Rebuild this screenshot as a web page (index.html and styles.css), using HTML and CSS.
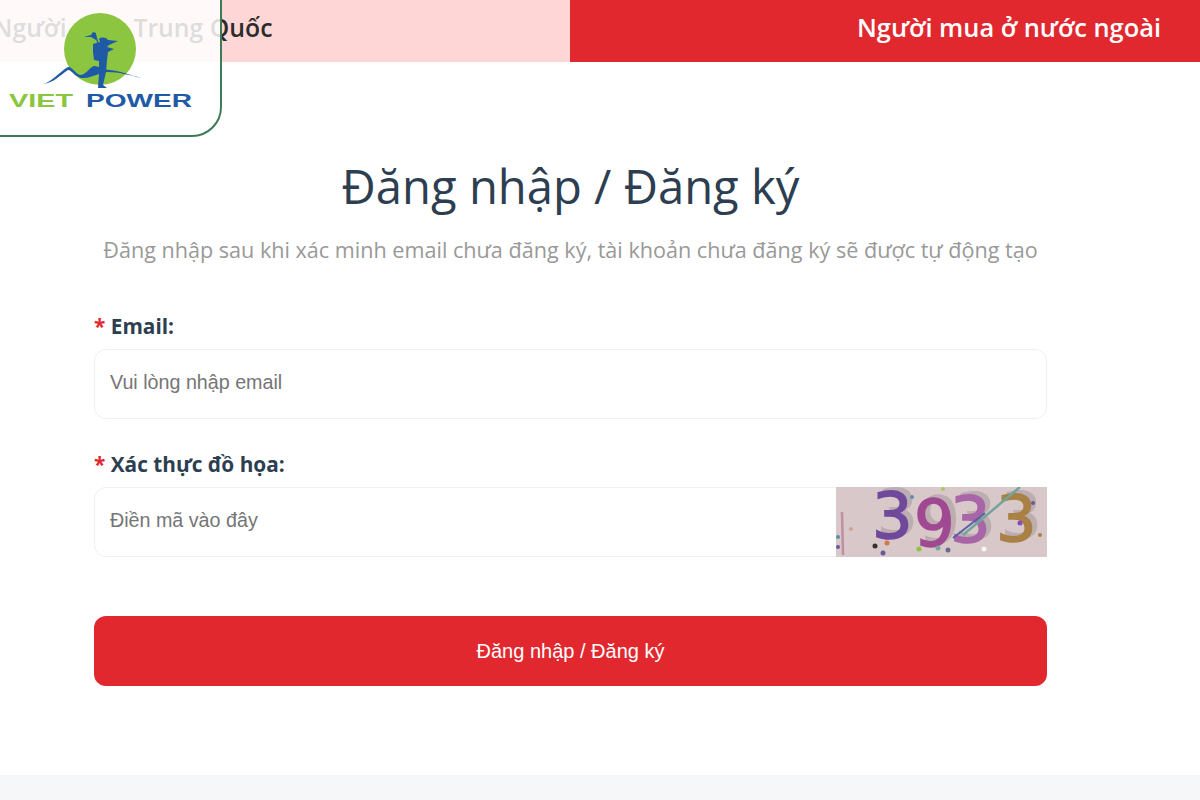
FILE: index.html
```html
<!DOCTYPE html>
<html lang="vi">
<head>
  <meta charset="UTF-8" />
  <meta name="viewport" content="width=device-width, initial-scale=1.0" />
  <title>Đăng nhập / Đăng ký</title>
  <link rel="stylesheet" href="styles.css">
</head>
<body>
<div class="tabs">
  <div class="tab tab-light">Người mua Trung Quốc</div>
  <div class="tab tab-active">Người mua ở nước ngoài</div>
</div>

<a class="logo" href="#">
  <svg width="222" height="137" viewBox="0 0 222 137">
    <circle cx="100" cy="49" r="36" fill="#8cc540"/>
    <path d="M43 84 C52 82 58 73 68 67 C72 66 76 75 81 75 C87 74 90 66 95 66 C100 67 104 70 110 70 C120 71 131 75 141 78 C130 75 118 72 108 72 C100 72 92 78 84 78 C76 79 72 70 68 70 C60 75 54 83 43 84 Z" fill="#1f5aa6"/>
    <path d="M84 37 L91 35 L93 32 L96 33 L96 40 L91 37 Z" fill="#1f5aa6"/>
    <path d="M95 33 L99 47" stroke="#1f5aa6" stroke-width="1.3" fill="none"/>
    <path d="M99 39 C101 37 106 37 108 40 L118 41 L109 45 L107 47 L114 49 L108 52 L107 60 L106 72 L103 85 L107 88 L98 88 L99 74 L99 61 L94 60 L93 52 L93 44 L100 42 Z" fill="#1f5aa6"/>
    <text class="logo-viet" x="9" y="107" textLength="64" lengthAdjust="spacingAndGlyphs">VIET</text>
    <text class="logo-power" x="86" y="107" textLength="106" lengthAdjust="spacingAndGlyphs">POWER</text>
  </svg>
</a>

<div class="main">
  <h1>Đăng nhập / Đăng ký</h1>
  <p class="sub">Đăng nhập sau khi xác minh email chưa đăng ký, tài khoản chưa đăng ký sẽ được tự động tạo</p>

  <form class="form">
    <div class="field">
      <label><span class="req">*</span> Email:</label>
      <div class="input-box">
        <input type="text" placeholder="Vui lòng nhập email">
      </div>
    </div>
    <div class="field">
      <label><span class="req">*</span> Xác thực đồ họa:</label>
      <div class="input-box">
        <input type="text" placeholder="Điền mã vào đây">
        <svg class="captcha" width="211" height="70" viewBox="0 0 211 70">
          <defs><filter id="soft"><feGaussianBlur stdDeviation="0.7"/></filter></defs>
          <rect width="211" height="70" fill="#d9c8c9"/>
          <g filter="url(#soft)">
            <path d="M6 25 L7 68" stroke="#c08fa0" stroke-width="2.5"/>
            <text class="captcha-num num-a" x="36" y="51">3</text>
            <text class="captcha-num num-b" x="78" y="59">9</text>
            <text class="captcha-num num-c" x="114" y="55">3</text>
            <text class="captcha-num num-d" x="160" y="54">3</text>
            <path d="M117 51 L149 26" stroke="#5a5fa8" stroke-width="2"/>
            <path d="M127 48 L184 0" stroke="#6fa69a" stroke-width="2.5"/>
            <circle cx="39" cy="59" r="2.5" fill="#333"/>
            <circle cx="47" cy="66" r="2.5" fill="#6a5a9c"/>
            <circle cx="51" cy="56" r="2.5" fill="#d8744a"/>
            <circle cx="2" cy="50" r="2" fill="#5a8fb0"/>
            <circle cx="2" cy="60" r="2" fill="#6a5a9c"/>
            <circle cx="15" cy="42" r="2" fill="#d8a090"/>
            <circle cx="83" cy="62" r="2.5" fill="#8cc540"/>
            <circle cx="102" cy="61" r="2.5" fill="#7aa6a0"/>
            <circle cx="112" cy="63" r="2.5" fill="#6a6a8c"/>
            <circle cx="148" cy="62" r="2.5" fill="#f5f5f5"/>
            <circle cx="184" cy="36" r="2.5" fill="#8a4ac0"/>
            <circle cx="197" cy="16" r="2" fill="#6a5a9c"/>
            <circle cx="204" cy="48" r="2" fill="#a98044"/>
            <circle cx="76" cy="10" r="2" fill="#5a8fb0"/>
            <circle cx="107" cy="2" r="2" fill="#a8c860"/>
          </g>
        </svg>
      </div>
    </div>
    <button class="submit" type="button">Đăng nhập / Đăng ký</button>
  </form>
</div>

<div class="footer-strip"></div>
</body>
</html>
```

FILE: styles.css
```css
html, body {
  margin: 0;
  padding: 0;
  height: 100%;
  overflow: hidden;
  background: white;
  font-family: 'Open Sans', 'Noto Sans', sans-serif;
}

body {
  display: flex;
  flex-direction: column;
  height: 800px;
}

.tabs {
  display: flex;
  height: 62px;
}

.tab {
  display: flex;
  align-items: center;
  font-size: 25.4px;
  font-weight: 600;
  padding-bottom: 9px;
  box-sizing: border-box;
  white-space: nowrap;
}

.tab-light {
  width: 570px;
  background: #ffd6d6;
  color: #2b2b2b;
  font-size: 24.8px;
  text-indent: -7px;
}

.tab-active {
  flex: 1;
  background: #e1282f;
  color: white;
  justify-content: flex-end;
  padding-right: 39px;
}

.logo {
  position: absolute;
  top: -2px;
  left: -2px;
  width: 220px;
  height: 135px;
  background: rgba(255, 255, 255, 0.84);
  border: 2px solid #3d7a56;
  border-bottom-right-radius: 30px;
  display: block;
}

.logo svg {
  display: block;
}

.logo-viet, .logo-power {
  font-family: 'Liberation Sans', sans-serif;
  font-size: 18px;
  font-weight: bold;
}

.logo-viet { fill: #8cc540; }
.logo-power { fill: #1f5aa6; }

.main {
  width: 953px;
  margin-left: 94px;
  flex: 1;
  display: flex;
  flex-direction: column;
}

h1 {
  margin: 90px 0 0;
  text-align: center;
  font-size: 47.2px;
  font-weight: 400;
  line-height: 68px;
  color: #2c3e50;
}

.sub {
  margin: 15px 0 0;
  text-align: center;
  font-size: 21.6px;
  line-height: 30px;
  color: #999;
  white-space: nowrap;
}

.form {
  margin-top: 47px;
  display: flex;
  flex-direction: column;
}

.field {
  margin-bottom: 31px;
}

.field label {
  display: block;
  font-size: 20.8px;
  font-weight: 700;
  line-height: 28px;
  margin-bottom: 9px;
  color: #2c3e50;
}

.req {
  color: #e1282f;
}

.input-box {
  display: flex;
  height: 70px;
  box-sizing: border-box;
  border: 1px solid #f0f0f0;
  border-radius: 12px;
  background: white;
}

.input-box input {
  flex: 1;
  min-width: 0;
  border: none;
  outline: none;
  background: transparent;
  padding: 0 15px 3px;
  font-family: 'Liberation Sans', Arial, sans-serif;
  font-size: 19.7px;
}

.input-box input::placeholder {
  color: #757575;
}

.captcha {
  flex: none;
  margin: -1px -1px -1px 0;
}

.captcha-num {
  font-family: 'DejaVu Sans', sans-serif;
  font-size: 64px;
  stroke-width: 1.5px;
  filter: drop-shadow(5px -3px 0 rgba(120, 110, 120, 0.3));
}

.num-a { fill: #6f4a9c; stroke: #6f4a9c; }
.num-b { fill: #a04a92; stroke: #a04a92; }
.num-c { fill: #a866a8; stroke: #a866a8; }
.num-d { fill: #a98044; stroke: #a98044; }

.submit {
  margin-top: 28px;
  height: 70px;
  padding-top: 2px;
  border: none;
  border-radius: 12px;
  background: #e1282f;
  color: white;
  font-family: 'Liberation Sans', Arial, sans-serif;
  font-size: 20px;
}

.footer-strip {
  height: 25px;
  background: #f5f7f9;
}
```
